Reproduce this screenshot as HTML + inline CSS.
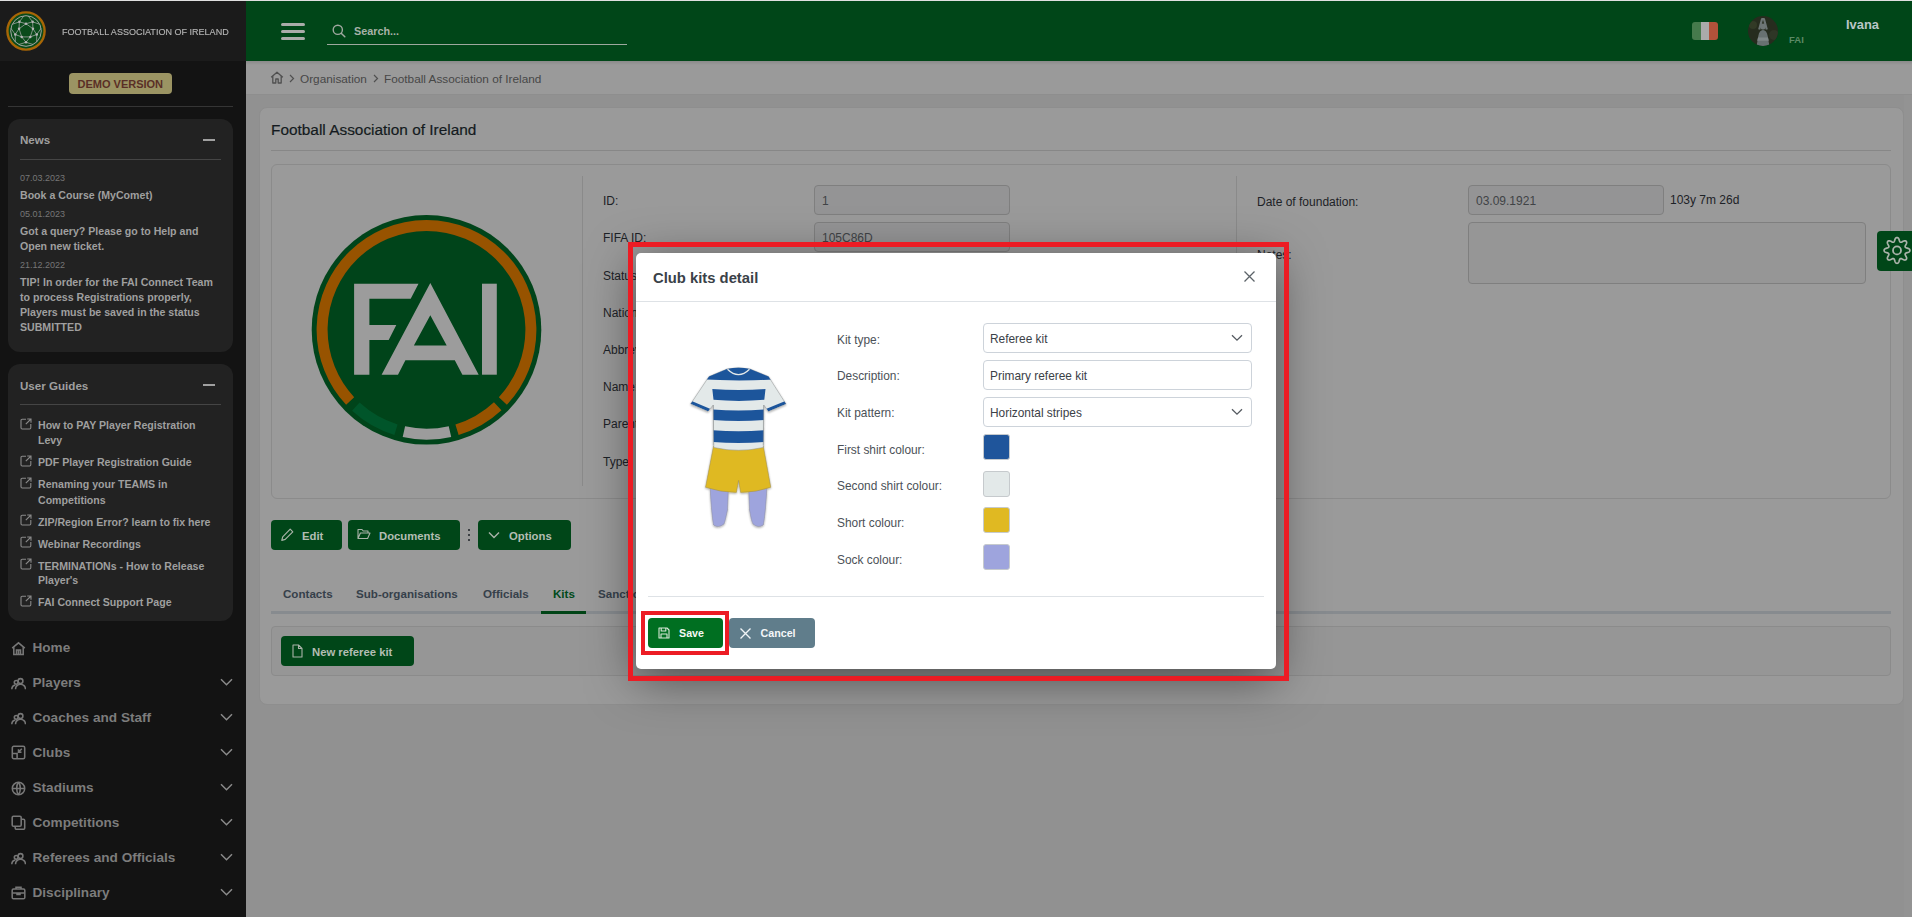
<!DOCTYPE html>
<html><head><meta charset="utf-8">
<style>
*{box-sizing:border-box;margin:0;padding:0}
html,body{width:1912px;height:917px;overflow:hidden;background:#919191;font-family:"Liberation Sans",sans-serif;position:relative}
.abs{position:absolute}
.t{position:absolute;white-space:nowrap;line-height:1}
#topline{left:0;top:0;width:1912px;height:1px;background:#e0e0e0}
#sb{left:0;top:1px;width:246px;height:916px;background:#131313}
#sbhead{left:0;top:1px;width:246px;height:60px;background:#1b1b1b}
#hdr{left:246px;top:1px;width:1666px;height:60px;background:#004618}
#bc{left:246px;top:61px;width:1666px;height:34px;background:#9a9a9a;border-bottom:1px solid #8e8e8e}
#card{left:259px;top:107px;width:1645px;height:598px;background:#9a9a9a;border:1px solid #8e8e8e;border-radius:8px}
.panel{position:absolute;left:8px;width:225px;background:#222;border-radius:12px}
.sbt{color:#9f9f9f;font-weight:700;font-size:10.6px}
.date{color:#767676;font-size:9px}
.nav{color:#7c7c7c;font-weight:700;font-size:13.6px}
.navi{position:absolute;left:10.8px;width:15px;height:15px}
.chev{position:absolute;left:220px;width:13px;height:8px}
.lbl{font-size:12px;color:#1d2227}
.inp{border:1px solid #7f7f7f;border-radius:4px}
.dis{background:#949495}
.inpt{font-size:12px;color:#404346}
.btn{height:30px;background:#004618;border-radius:4px}
.btnt{font-size:11.3px;font-weight:700;color:#b3bdb3}
.tab{font-size:11.6px;color:#36404a;font-weight:700}
.mlbl{font-size:11.9px;color:#4b5157}
.minp{width:269px;border:1px solid #cdd3da;border-radius:4px;background:#fff}
.minpt{font-size:11.9px;color:#3b4147}
.sw{width:27px;height:26px;border:1px solid #c6cacd;border-radius:3px}
</style></head><body>
<div id="topline" class="abs"></div>
<div id="sb" class="abs"></div>
<div id="sbhead" class="abs"></div>
<!-- sidebar logo -->
<svg class="abs" style="left:4px;top:9px" width="44" height="44" viewBox="0 0 44 44">
 <circle cx="22" cy="22" r="18.6" fill="#0a4a1a" stroke="#a86606" stroke-width="2.4"/>
 <circle cx="22" cy="22" r="15.3" fill="none" stroke="#b0b0b0" stroke-width="0.9"/>
 <g stroke="#a8a8a8" stroke-width="0.75" fill="none"><polygon points="22.00,14.70 28.94,19.74 26.29,27.91 17.71,27.91 15.06,19.74"/><polyline points="22.00,14.70 28.64,12.86 28.94,19.74 32.75,25.49 26.29,27.91 22.00,33.30 17.71,27.91 11.25,25.49 15.06,19.74 15.36,12.86 22.00,14.70"/><line x1="28.64" y1="12.86" x2="24.13" y2="6.85"/><line x1="28.64" y1="12.86" x2="35.75" y2="15.29"/><line x1="32.75" y1="25.49" x2="37.07" y2="19.34"/><line x1="32.75" y1="25.49" x2="32.63" y2="33.01"/><line x1="22.00" y1="33.30" x2="29.18" y2="35.51"/><line x1="22.00" y1="33.30" x2="14.82" y2="35.51"/><line x1="11.25" y1="25.49" x2="11.37" y2="33.01"/><line x1="11.25" y1="25.49" x2="6.93" y2="19.34"/><line x1="15.36" y1="12.86" x2="8.25" y2="15.29"/><line x1="15.36" y1="12.86" x2="19.87" y2="6.85"/></g>
 <g fill="#b8b8b8"><circle cx="22.00" cy="14.70" r="1.25"/><circle cx="28.94" cy="19.74" r="1.25"/><circle cx="26.29" cy="27.91" r="1.25"/><circle cx="17.71" cy="27.91" r="1.25"/><circle cx="15.06" cy="19.74" r="1.25"/><circle cx="28.64" cy="12.86" r="1.25"/><circle cx="32.75" cy="25.49" r="1.25"/><circle cx="22.00" cy="33.30" r="1.25"/><circle cx="11.25" cy="25.49" r="1.25"/><circle cx="15.36" cy="12.86" r="1.25"/></g>
</svg>
<div class="t" style="left:62px;top:26.5px;font-size:9.9px;color:#b4b4b4;transform:scaleX(0.915);transform-origin:0 0;-webkit-text-stroke:0.15px #b4b4b4">FOOTBALL ASSOCIATION OF IRELAND</div>
<div class="abs" style="left:69px;top:73px;width:103px;height:21px;background:#9b9463;border-radius:4px"></div>
<div class="t" style="left:77.5px;top:78.5px;font-size:11px;font-weight:700;color:#5a2f26">DEMO VERSION</div>
<div class="abs" style="left:8px;top:106px;width:225px;height:1px;background:#353535"></div>

<!-- News -->
<div class="panel" style="top:119px;height:233px"></div>
<div class="t sbt" style="left:20px;top:133.5px;font-size:11.6px">News</div>
<div class="abs" style="left:203px;top:139px;width:12px;height:2px;background:#a0a0a0"></div>
<div class="abs" style="left:20px;top:159px;width:201px;height:1px;background:#454545"></div>
<div class="t date" style="left:20px;top:174px">07.03.2023</div>
<div class="t sbt" style="left:20px;top:190px">Book a Course (MyComet)</div>
<div class="t date" style="left:20px;top:210px">05.01.2023</div>
<div class="t sbt" style="left:20px;top:226px">Got a query? Please go to Help and</div>
<div class="t sbt" style="left:20px;top:241px">Open new ticket.</div>
<div class="t date" style="left:20px;top:261px">21.12.2022</div>
<div class="t sbt" style="left:20px;top:277px">TIP! In order for the FAI Connect Team</div>
<div class="t sbt" style="left:20px;top:292px">to process Registrations properly,</div>
<div class="t sbt" style="left:20px;top:307px">Players must be saved in the status</div>
<div class="t sbt" style="left:20px;top:322px">SUBMITTED</div>

<!-- User guides -->
<div class="panel" style="top:364px;height:257px"></div>
<div class="t sbt" style="left:20px;top:379.5px;font-size:11.6px">User Guides</div>
<div class="abs" style="left:203px;top:384px;width:12px;height:2px;background:#a0a0a0"></div>
<div class="abs" style="left:20px;top:404px;width:201px;height:1px;background:#454545"></div>
<svg class="abs" style="left:20px;top:418px" width="12" height="12" viewBox="0 0 12 12"><path d="M6 1.2H2.2A1.2 1.2 0 0 0 1 2.4v7.4A1.2 1.2 0 0 0 2.2 11h7.4a1.2 1.2 0 0 0 1.2-1.2V6" fill="none" stroke="#8a8a8a" stroke-width="1.1"/><path d="M7.2 1h3.8v3.8M11 1L5.8 6.2" fill="none" stroke="#8a8a8a" stroke-width="1.1"/></svg>
<div class="t sbt" style="left:38px;top:420px">How to PAY Player Registration</div>
<div class="t sbt" style="left:38px;top:435px">Levy</div>
<svg class="abs" style="left:20px;top:455px" width="12" height="12" viewBox="0 0 12 12"><path d="M6 1.2H2.2A1.2 1.2 0 0 0 1 2.4v7.4A1.2 1.2 0 0 0 2.2 11h7.4a1.2 1.2 0 0 0 1.2-1.2V6" fill="none" stroke="#8a8a8a" stroke-width="1.1"/><path d="M7.2 1h3.8v3.8M11 1L5.8 6.2" fill="none" stroke="#8a8a8a" stroke-width="1.1"/></svg>
<div class="t sbt" style="left:38px;top:457px">PDF Player Registration Guide</div>
<svg class="abs" style="left:20px;top:477px" width="12" height="12" viewBox="0 0 12 12"><path d="M6 1.2H2.2A1.2 1.2 0 0 0 1 2.4v7.4A1.2 1.2 0 0 0 2.2 11h7.4a1.2 1.2 0 0 0 1.2-1.2V6" fill="none" stroke="#8a8a8a" stroke-width="1.1"/><path d="M7.2 1h3.8v3.8M11 1L5.8 6.2" fill="none" stroke="#8a8a8a" stroke-width="1.1"/></svg>
<div class="t sbt" style="left:38px;top:479px">Renaming your TEAMS in</div>
<div class="t sbt" style="left:38px;top:495px">Competitions</div>
<svg class="abs" style="left:20px;top:514px" width="12" height="12" viewBox="0 0 12 12"><path d="M6 1.2H2.2A1.2 1.2 0 0 0 1 2.4v7.4A1.2 1.2 0 0 0 2.2 11h7.4a1.2 1.2 0 0 0 1.2-1.2V6" fill="none" stroke="#8a8a8a" stroke-width="1.1"/><path d="M7.2 1h3.8v3.8M11 1L5.8 6.2" fill="none" stroke="#8a8a8a" stroke-width="1.1"/></svg>
<div class="t sbt" style="left:38px;top:517px">ZIP/Region Error? learn to fix here</div>
<svg class="abs" style="left:20px;top:536px" width="12" height="12" viewBox="0 0 12 12"><path d="M6 1.2H2.2A1.2 1.2 0 0 0 1 2.4v7.4A1.2 1.2 0 0 0 2.2 11h7.4a1.2 1.2 0 0 0 1.2-1.2V6" fill="none" stroke="#8a8a8a" stroke-width="1.1"/><path d="M7.2 1h3.8v3.8M11 1L5.8 6.2" fill="none" stroke="#8a8a8a" stroke-width="1.1"/></svg>
<div class="t sbt" style="left:38px;top:539px">Webinar Recordings</div>
<svg class="abs" style="left:20px;top:558px" width="12" height="12" viewBox="0 0 12 12"><path d="M6 1.2H2.2A1.2 1.2 0 0 0 1 2.4v7.4A1.2 1.2 0 0 0 2.2 11h7.4a1.2 1.2 0 0 0 1.2-1.2V6" fill="none" stroke="#8a8a8a" stroke-width="1.1"/><path d="M7.2 1h3.8v3.8M11 1L5.8 6.2" fill="none" stroke="#8a8a8a" stroke-width="1.1"/></svg>
<div class="t sbt" style="left:38px;top:561px">TERMINATIONs - How to Release</div>
<div class="t sbt" style="left:38px;top:575px">Player's</div>
<svg class="abs" style="left:20px;top:595px" width="12" height="12" viewBox="0 0 12 12"><path d="M6 1.2H2.2A1.2 1.2 0 0 0 1 2.4v7.4A1.2 1.2 0 0 0 2.2 11h7.4a1.2 1.2 0 0 0 1.2-1.2V6" fill="none" stroke="#8a8a8a" stroke-width="1.1"/><path d="M7.2 1h3.8v3.8M11 1L5.8 6.2" fill="none" stroke="#8a8a8a" stroke-width="1.1"/></svg>
<div class="t sbt" style="left:38px;top:597px">FAI Connect Support Page</div>

<!-- Nav -->
<div class="t nav" style="left:32.5px;top:641px">Home</div>
<svg class="navi" style="top:641px" viewBox="0 0 15 15" fill="none" stroke="#777" stroke-width="1.55" id="ic_Home"><path d="M1.2 7.2L7.5 1.8l6.3 5.4"/><path d="M2.8 6.2v7.3h9.4V6.2"/><path d="M5.5 13.5V9h4v4.5M7.5 9v4.5"/></svg>
<div class="t nav" style="left:32.5px;top:676px">Players</div>
<svg class="navi" style="top:676px" viewBox="0 0 15 15" fill="none" stroke="#777" stroke-width="1.55" id="ic_Players"><circle cx="9.5" cy="5" r="2.4"/><path d="M4.5 13.2a5 5 0 0 1 10 0"/><circle cx="5.2" cy="6.3" r="1.9"/><path d="M0.8 13.2a4.4 4.4 0 0 1 3.6-4.2"/></svg>
<svg class="chev" style="top:678px" viewBox="0 0 13 8"><path d="M1 1.2l5.5 5.5 5.5-5.5" fill="none" stroke="#8a8a8a" stroke-width="1.5"/></svg>
<div class="t nav" style="left:32.5px;top:711px">Coaches and Staff</div>
<svg class="navi" style="top:711px" viewBox="0 0 15 15" fill="none" stroke="#777" stroke-width="1.55" id="ic_Coaches"><circle cx="9.5" cy="5" r="2.4"/><path d="M4.5 13.2a5 5 0 0 1 10 0"/><circle cx="5.2" cy="6.3" r="1.9"/><path d="M0.8 13.2a4.4 4.4 0 0 1 3.6-4.2"/></svg>
<svg class="chev" style="top:713px" viewBox="0 0 13 8"><path d="M1 1.2l5.5 5.5 5.5-5.5" fill="none" stroke="#8a8a8a" stroke-width="1.5"/></svg>
<div class="t nav" style="left:32.5px;top:746px">Clubs</div>
<svg class="navi" style="top:745px" viewBox="0 0 15 15" fill="none" stroke="#777" stroke-width="1.55" id="ic_Clubs"><rect x="1.3" y="1.3" width="12.4" height="12.4" rx="1.5"/><path d="M1.3 8.5h4.8v5.2M10.8 3.8L7.5 7.2M7.5 4.2v3h3"/></svg>
<svg class="chev" style="top:748px" viewBox="0 0 13 8"><path d="M1 1.2l5.5 5.5 5.5-5.5" fill="none" stroke="#8a8a8a" stroke-width="1.5"/></svg>
<div class="t nav" style="left:32.5px;top:781px">Stadiums</div>
<svg class="navi" style="top:781px" viewBox="0 0 15 15" fill="none" stroke="#777" stroke-width="1.55" id="ic_Stadiums"><circle cx="7.5" cy="7.5" r="6.2"/><path d="M1.3 7.5h12.4M7.5 1.3c-2.4 2.8-2.4 9.6 0 12.4M7.5 1.3c2.4 2.8 2.4 9.6 0 12.4"/></svg>
<svg class="chev" style="top:783px" viewBox="0 0 13 8"><path d="M1 1.2l5.5 5.5 5.5-5.5" fill="none" stroke="#8a8a8a" stroke-width="1.5"/></svg>
<div class="t nav" style="left:32.5px;top:816px">Competitions</div>
<svg class="navi" style="top:815px" viewBox="0 0 15 15" fill="none" stroke="#777" stroke-width="1.55" id="ic_Competitions"><rect x="1.2" y="1.2" width="9" height="10" rx="1.3"/><path d="M10.2 4.2h2.2a1.3 1.3 0 0 1 1.3 1.3v7.5a1.3 1.3 0 0 1-1.3 1.3H5.5a1.3 1.3 0 0 1-1.3-1.3v-1.8"/></svg>
<svg class="chev" style="top:818px" viewBox="0 0 13 8"><path d="M1 1.2l5.5 5.5 5.5-5.5" fill="none" stroke="#8a8a8a" stroke-width="1.5"/></svg>
<div class="t nav" style="left:32.5px;top:851px">Referees and Officials</div>
<svg class="navi" style="top:851px" viewBox="0 0 15 15" fill="none" stroke="#777" stroke-width="1.55" id="ic_Referees"><circle cx="9.5" cy="5" r="2.4"/><path d="M4.5 13.2a5 5 0 0 1 10 0"/><circle cx="5.2" cy="6.3" r="1.9"/><path d="M0.8 13.2a4.4 4.4 0 0 1 3.6-4.2"/></svg>
<svg class="chev" style="top:853px" viewBox="0 0 13 8"><path d="M1 1.2l5.5 5.5 5.5-5.5" fill="none" stroke="#8a8a8a" stroke-width="1.5"/></svg>
<div class="t nav" style="left:32.5px;top:886px">Disciplinary</div>
<svg class="navi" style="top:885px" viewBox="0 0 15 15" fill="none" stroke="#777" stroke-width="1.55" id="ic_Disciplinary"><rect x="1.2" y="4" width="12.6" height="9.8" rx="1.3"/><path d="M5 4V2.2h5V4M1.2 8h12.6M6 8v1.5h3V8"/></svg>
<svg class="chev" style="top:888px" viewBox="0 0 13 8"><path d="M1 1.2l5.5 5.5 5.5-5.5" fill="none" stroke="#8a8a8a" stroke-width="1.5"/></svg>

<!-- header -->
<div id="hdr" class="abs"></div>
<div class="abs" style="left:281px;top:23px;width:24px;height:3px;background:#a9aca9;border-radius:2px"></div>
<div class="abs" style="left:281px;top:30px;width:24px;height:3px;background:#a9aca9;border-radius:2px"></div>
<div class="abs" style="left:281px;top:37px;width:24px;height:3px;background:#a9aca9;border-radius:2px"></div>
<svg class="abs" style="left:332px;top:24px" width="14" height="14" viewBox="0 0 14 14"><circle cx="5.8" cy="5.8" r="4.6" fill="none" stroke="#a0a8a0" stroke-width="1.4"/><path d="M9.2 9.2L12.8 12.8" stroke="#a0a8a0" stroke-width="1.5" stroke-linecap="round"/></svg>
<div class="t" style="left:354px;top:26px;font-size:10.8px;color:#a8b2a8;font-weight:700">Search...</div>
<div class="abs" style="left:327px;top:44px;width:300px;height:1px;background:#9ea89e"></div>
<div class="abs" style="left:1692px;top:22px;width:26px;height:18px;border-radius:3px;overflow:hidden;display:flex"><div style="flex:1;background:#467a4c"></div><div style="flex:1;background:#aaaaaa"></div><div style="flex:1;background:#b0523a"></div></div>
<svg class="abs" style="left:1748px;top:16px" width="30" height="30" viewBox="0 0 30 30"><defs><clipPath id="av"><circle cx="15" cy="15" r="15"/></clipPath></defs><g clip-path="url(#av)"><rect width="30" height="30" fill="#262c1e"/><circle cx="5" cy="9" r="4" fill="#323a26"/><circle cx="26" cy="19" r="5" fill="#2e3626"/><path d="M11.2 13.5L14 3.2h2l2.8 10.3" fill="none" stroke="#6c7474" stroke-width="2.2" stroke-linejoin="round"/><ellipse cx="15" cy="10.5" rx="2.7" ry="3.1" fill="#6e7676"/><path d="M8.5 30.5l1.8-10.5c0.6-3.8 2.4-6 4.7-6s4.1 2.2 4.7 6l1.8 10.5z" fill="#687171"/><path d="M10 21.5h10l0.8 3.2h-11.6z" fill="#7f8787"/></g></svg>
<div class="t" style="left:1789px;top:35px;font-size:9.5px;font-weight:700;color:#5c8a66">FAI</div>
<div class="t" style="left:1846px;top:19px;font-size:12.9px;font-weight:700;color:#b9c5c6">Ivana</div>
<div id="bc" class="abs"></div>
<div class="abs" style="left:246px;top:61px;width:1666px;height:4px;background:linear-gradient(#8a8a8a,rgba(154,154,154,0))"></div>
<svg class="abs" style="left:270px;top:71px" width="14" height="13" viewBox="0 0 14 13"><path d="M1.2 6.2L7 1.2l5.8 5M2.8 5v7h3v-4h2.4v4h3V5" fill="none" stroke="#505050" stroke-width="1.3" stroke-linejoin="round"/></svg>
<svg class="abs" style="left:289px;top:74px" width="6" height="9" viewBox="0 0 6 9"><path d="M1 1l3.5 3.5L1 8" fill="none" stroke="#505050" stroke-width="1.2"/></svg>
<div class="t" style="left:300px;top:74px;font-size:11.8px;color:#474747">Organisation</div>
<svg class="abs" style="left:373px;top:74px" width="6" height="9" viewBox="0 0 6 9"><path d="M1 1l3.5 3.5L1 8" fill="none" stroke="#505050" stroke-width="1.2"/></svg>
<div class="t" style="left:384px;top:74px;font-size:11.8px;color:#474747">Football Association of Ireland</div>
<!-- card -->
<div class="abs" style="left:1904px;top:95px;width:8px;height:822px;background:#939393"></div>
<div id="card" class="abs"></div>
<div class="t" style="left:271px;top:122px;font-size:15.4px;color:#141a20;-webkit-text-stroke:0.2px #141a20">Football Association of Ireland</div>
<div class="abs" style="left:271px;top:150px;width:1620px;height:1px;background:#878787"></div>
<div class="abs" style="left:271px;top:164px;width:1620px;height:335px;border:1px solid #8b8b8b;border-radius:6px"></div>
<div class="abs" style="left:582px;top:176px;width:1px;height:310px;background:#8a8a8a"></div>
<div class="abs" style="left:1236px;top:176px;width:1px;height:310px;background:#8a8a8a"></div>
<svg class="abs" style="left:311px;top:214px" width="232" height="232" viewBox="0 0 232 232">
 <circle cx="115.5" cy="115.8" r="114.8" fill="#00441a"/>
 <path d="M39.15 187.00 A104.4 104.4 0 1 1 191.85 187.00" fill="none" stroke="#975300" stroke-width="11"/>
 <path d="M84.98 215.64 A104.4 104.4 0 0 1 44.83 192.65" fill="none" stroke="#00552a" stroke-width="11"/>
 <path d="M138.98 217.52 A104.4 104.4 0 0 1 92.90 217.73" fill="none" stroke="#9c9c9c" stroke-width="11"/>
 <path d="M186.70 192.15 A104.4 104.4 0 0 1 146.02 215.64" fill="none" stroke="#975300" stroke-width="11"/>
 <g fill="#9c9c9c">
  <path d="M43.1 69.7H107.5L99.7 84.8H58.4V111H85.3L77.7 126H58.4V160.7H43.1Z"/>
  <path d="M119.3 69.1L167.7 160.7H151.4L143.8 146.3H94.4L87 160.7H70.6Z M119.3 101.2L102.9 131.5H135.7Z" fill-rule="evenodd"/>
  <rect x="171" y="69.7" width="14.8" height="91"/>
 </g>
</svg>
<div class="t lbl" style="left:603px;top:195px">ID:</div>
<div class="t lbl" style="left:603px;top:232px">FIFA ID:</div>
<div class="t lbl" style="left:603px;top:270px">Status:</div>
<div class="t lbl" style="left:603px;top:307px">Nationality:</div>
<div class="t lbl" style="left:603px;top:344px">Abbreviation:</div>
<div class="t lbl" style="left:603px;top:381px">Name:</div>
<div class="t lbl" style="left:603px;top:418px">Parent:</div>
<div class="t lbl" style="left:603px;top:456px">Type:</div>
<div class="abs inp dis" style="left:814px;top:185px;width:196px;height:30px"></div>
<div class="t inpt" style="left:822px;top:195px">1</div>
<div class="abs inp dis" style="left:814px;top:222px;width:196px;height:30px"></div>
<div class="t inpt" style="left:822px;top:232px">105C86D</div>
<div class="t lbl" style="left:1257px;top:195.5px">Date of foundation:</div>
<div class="abs inp dis" style="left:1468px;top:185px;width:196px;height:30px"></div>
<div class="t inpt" style="left:1476px;top:195px">03.09.1921</div>
<div class="t lbl" style="left:1670px;top:194px;color:#1d2227">103y 7m 26d</div>
<div class="t lbl" style="left:1257px;top:248.5px">Notes:</div>
<div class="abs inp" style="left:1468px;top:222px;width:398px;height:62px;background:#969696"></div>
<div class="abs" style="left:1877px;top:231px;width:35px;height:40px;background:#004618;border-radius:4px 0 0 4px"></div>
<svg class="abs" style="left:1877px;top:231px" width="35" height="40" viewBox="0 0 35 40"><polygon points="32.90,19.40 32.85,19.80 32.71,20.20 32.45,20.58 32.06,20.92 31.51,21.22 30.86,21.47 30.18,21.68 29.57,21.86 29.08,22.04 28.72,22.23 28.46,22.45 28.28,22.68 28.18,22.94 28.13,23.23 28.16,23.56 28.28,23.95 28.50,24.43 28.81,24.99 29.15,25.62 29.43,26.25 29.60,26.85 29.64,27.37 29.55,27.82 29.38,28.20 29.12,28.52 28.80,28.78 28.42,28.95 27.97,29.04 27.45,29.00 26.85,28.83 26.22,28.55 25.59,28.21 25.03,27.90 24.55,27.68 24.16,27.56 23.83,27.53 23.54,27.58 23.28,27.68 23.05,27.86 22.83,28.12 22.64,28.48 22.46,28.97 22.28,29.58 22.07,30.26 21.82,30.91 21.52,31.46 21.18,31.85 20.80,32.11 20.40,32.25 20.00,32.30 19.60,32.25 19.20,32.11 18.82,31.85 18.48,31.46 18.18,30.91 17.93,30.26 17.72,29.58 17.54,28.97 17.36,28.48 17.17,28.12 16.95,27.86 16.72,27.68 16.46,27.58 16.17,27.53 15.84,27.56 15.45,27.68 14.97,27.90 14.41,28.21 13.78,28.55 13.15,28.83 12.55,29.00 12.03,29.04 11.58,28.95 11.20,28.78 10.88,28.52 10.62,28.20 10.45,27.82 10.36,27.37 10.40,26.85 10.57,26.25 10.85,25.62 11.19,24.99 11.50,24.43 11.72,23.95 11.84,23.56 11.87,23.23 11.82,22.94 11.72,22.68 11.54,22.45 11.28,22.23 10.92,22.04 10.43,21.86 9.82,21.68 9.14,21.47 8.49,21.22 7.94,20.92 7.55,20.58 7.29,20.20 7.15,19.80 7.10,19.40 7.15,19.00 7.29,18.60 7.55,18.22 7.94,17.88 8.49,17.58 9.14,17.33 9.82,17.12 10.43,16.94 10.92,16.76 11.28,16.57 11.54,16.35 11.72,16.12 11.82,15.86 11.87,15.57 11.84,15.24 11.72,14.85 11.50,14.37 11.19,13.81 10.85,13.18 10.57,12.55 10.40,11.95 10.36,11.43 10.45,10.98 10.62,10.60 10.88,10.28 11.20,10.02 11.58,9.85 12.03,9.76 12.55,9.80 13.15,9.97 13.78,10.25 14.41,10.59 14.97,10.90 15.45,11.12 15.84,11.24 16.17,11.27 16.46,11.22 16.72,11.12 16.95,10.94 17.17,10.68 17.36,10.32 17.54,9.83 17.72,9.22 17.93,8.54 18.18,7.89 18.48,7.34 18.82,6.95 19.20,6.69 19.60,6.55 20.00,6.50 20.40,6.55 20.80,6.69 21.18,6.95 21.52,7.34 21.82,7.89 22.07,8.54 22.28,9.22 22.46,9.83 22.64,10.32 22.83,10.68 23.05,10.94 23.28,11.12 23.54,11.22 23.83,11.27 24.16,11.24 24.55,11.12 25.03,10.90 25.59,10.59 26.22,10.25 26.85,9.97 27.45,9.80 27.97,9.76 28.42,9.85 28.80,10.02 29.12,10.28 29.38,10.60 29.55,10.98 29.64,11.43 29.60,11.95 29.43,12.55 29.15,13.18 28.81,13.81 28.50,14.37 28.28,14.85 28.16,15.24 28.13,15.57 28.18,15.86 28.28,16.12 28.46,16.35 28.72,16.57 29.08,16.76 29.57,16.94 30.18,17.12 30.86,17.33 31.51,17.58 32.06,17.88 32.45,18.22 32.71,18.60 32.85,19.00" fill="none" stroke="#aab3aa" stroke-width="1.7" stroke-linejoin="round"/><circle cx="20.0" cy="19.4" r="4" fill="none" stroke="#aab3aa" stroke-width="1.8"/></svg>
<!-- buttons -->
<div class="abs btn" style="left:271px;top:520px;width:71px"></div>
<svg class="abs" style="left:281px;top:528px" width="13" height="14" viewBox="0 0 13 14"><path d="M9.2 1.2l2.6 2.6-7.6 7.6-3.4.9.9-3.4z" fill="none" stroke="#a9b3a9" stroke-width="1.2" stroke-linejoin="round"/></svg>
<div class="t btnt" style="left:302px;top:530.5px">Edit</div>
<div class="abs btn" style="left:348px;top:520px;width:112px"></div>
<svg class="abs" style="left:357px;top:528px" width="14" height="12" viewBox="0 0 14 12"><path d="M1 10.5V1.5h4l1.2 1.5H11v2M1 10.5l2.4-5.5H13l-2.4 5.5z" fill="none" stroke="#a9b3a9" stroke-width="1.1" stroke-linejoin="round"/></svg>
<div class="t btnt" style="left:379px;top:530.5px">Documents</div>
<div class="abs" style="left:467.5px;top:529px;width:2.2px;height:2.2px;background:#1d2227;border-radius:50%"></div>
<div class="abs" style="left:467.5px;top:533.8px;width:2.2px;height:2.2px;background:#1d2227;border-radius:50%"></div>
<div class="abs" style="left:467.5px;top:538.6px;width:2.2px;height:2.2px;background:#1d2227;border-radius:50%"></div>
<div class="abs btn" style="left:478px;top:520px;width:93px"></div>
<svg class="abs" style="left:488px;top:531px" width="12" height="8" viewBox="0 0 12 8"><path d="M1 1.5l5 5 5-5" fill="none" stroke="#a9b3a9" stroke-width="1.4"/></svg>
<div class="t btnt" style="left:509px;top:530.5px">Options</div>
<!-- tabs -->
<div class="t tab" style="left:283px;top:588px">Contacts</div>
<div class="t tab" style="left:356px;top:588px">Sub-organisations</div>
<div class="t tab" style="left:483px;top:588px">Officials</div>
<div class="t tab" style="left:553px;top:588px;color:#004a1a">Kits</div>
<div class="t tab" style="left:598px;top:588px">Sanctions</div>
<div class="abs" style="left:271px;top:611px;width:1620px;height:3px;background:#878b8f"></div>
<div class="abs" style="left:541px;top:611px;width:45px;height:3px;background:#004416"></div>
<div class="abs" style="left:271px;top:626px;width:1620px;height:50px;border:1px solid #8b8b8b;border-radius:4px;background:#969696"></div>
<div class="abs btn" style="left:281px;top:636px;width:133px"></div>
<svg class="abs" style="left:292px;top:644px" width="11" height="14" viewBox="0 0 11 14"><path d="M1 1h5.5L10 4.5V13H1zM6.5 1v3.5H10" fill="none" stroke="#a9b3a9" stroke-width="1.1" stroke-linejoin="round"/></svg>
<div class="t btnt" style="left:312px;top:646.5px">New referee kit</div>
<!-- modal -->
<div class="abs" style="left:636px;top:253px;width:640px;height:416px;background:#fff;border-radius:5px;box-shadow:0 10px 48px rgba(0,0,0,0.5)"></div>
<div class="t" style="left:653px;top:271px;font-size:14.8px;font-weight:700;color:#3a4148">Club kits detail</div>
<svg class="abs" style="left:1243px;top:270px" width="13" height="13" viewBox="0 0 13 13"><path d="M1.5 1.5l10 10M11.5 1.5l-10 10" stroke="#5c6369" stroke-width="1.3"/></svg>
<div class="abs" style="left:636px;top:301px;width:640px;height:1px;background:#dee2e6"></div>
<div class="t mlbl" style="left:837px;top:334.8px">Kit type:</div>
<div class="t mlbl" style="left:837px;top:371.3px">Description:</div>
<div class="t mlbl" style="left:837px;top:408.3px">Kit pattern:</div>
<div class="t mlbl" style="left:837px;top:445.3px">First shirt colour:</div>
<div class="t mlbl" style="left:837px;top:481.3px">Second shirt colour:</div>
<div class="t mlbl" style="left:837px;top:518.3px">Short colour:</div>
<div class="t mlbl" style="left:837px;top:555.3px">Sock colour:</div>
<div class="abs minp" style="left:983px;top:323px;height:30px"></div>
<div class="t minpt" style="left:990px;top:333.5px">Referee kit</div>
<svg class="abs" style="left:1231px;top:334px" width="12" height="8" viewBox="0 0 12 8"><path d="M1 1.2l5 5 5-5" fill="none" stroke="#555b61" stroke-width="1.3"/></svg>
<div class="abs minp" style="left:983px;top:360px;height:30px"></div>
<div class="t minpt" style="left:990px;top:370.5px">Primary referee kit</div>
<div class="abs minp" style="left:983px;top:397px;height:30px"></div>
<div class="t minpt" style="left:990px;top:407.5px">Horizontal stripes</div>
<svg class="abs" style="left:1231px;top:408px" width="12" height="8" viewBox="0 0 12 8"><path d="M1 1.2l5 5 5-5" fill="none" stroke="#555b61" stroke-width="1.3"/></svg>
<div class="abs sw" style="left:983px;top:434px;background:#1f559b"></div>
<div class="abs sw" style="left:983px;top:471px;background:#e3e9e9"></div>
<div class="abs sw" style="left:983px;top:507px;background:#e0b922"></div>
<div class="abs sw" style="left:983px;top:544px;background:#9ea4dd"></div>
<div class="abs" style="left:648px;top:596px;width:616px;height:1px;background:#dee2e6"></div>
<div class="abs" style="left:648px;top:618px;width:75px;height:30px;background:#006f21;border-radius:4px"></div>
<svg class="abs" style="left:658px;top:627px" width="12" height="12" viewBox="0 0 12 12"><path d="M1 1h8l2 2v8H1z M3.2 1v3h4.6V1 M3 11V7h6v4" fill="none" stroke="#d8e8d8" stroke-width="1.1" stroke-linejoin="round"/></svg>
<div class="t" style="left:679px;top:628px;font-size:10.7px;font-weight:700;color:#f4f8f4">Save</div>
<div class="abs" style="left:729px;top:618px;width:86px;height:30px;background:#607d8b;border-radius:4px"></div>
<svg class="abs" style="left:739px;top:627px" width="13" height="13" viewBox="0 0 13 13"><path d="M1.5 1.5l10 10M11.5 1.5l-10 10" stroke="#f0f4f6" stroke-width="1.4"/></svg>
<div class="t" style="left:760.5px;top:628px;font-size:10.7px;font-weight:700;color:#f4f6f8">Cancel</div>
<div class="abs" style="left:628px;top:242px;width:661px;height:439px;border:5px solid #ec1c24"></div>
<div class="abs" style="left:641px;top:611px;width:88px;height:44px;border:4.5px solid #ec1c24"></div>
<svg class="abs" style="left:680px;top:360px" width="120" height="180" viewBox="680 360 120 180">
 <defs>
  <filter id="ksh" x="-20%" y="-20%" width="140%" height="140%"><feGaussianBlur in="SourceAlpha" stdDeviation="1.2"/><feOffset dx="0" dy="0.5"/><feComponentTransfer><feFuncA type="linear" slope="0.35"/></feComponentTransfer><feMerge><feMergeNode/><feMergeNode in="SourceGraphic"/></feMerge></filter>
  <clipPath id="shirtclip"><path d="M727 369 L709 376.5 L690.6 404 L708 411.5 L713.2 405 L713.8 447.5 Q738.5 453 763.3 447.5 L763.8 405 L768.5 411.5 L786 404 L768.5 376.5 L750 369 Q738.5 366.5 727 369 Z"/></clipPath>
 </defs>
 <g filter="url(#ksh)">
  <path d="M710 486 L728.5 486 L727.5 510 Q725 522 724 524 Q718.5 528.5 713.5 525 Q711.5 515 710 486 Z" fill="#9ea4dd" stroke="#8a8a9a" stroke-width="0.5"/>
  <path d="M748.5 486 L767 486 Q765.5 515 763.3 525 Q758 528.5 753 524 Q751.5 522 749.5 510 Z" fill="#9ea4dd" stroke="#8a8a9a" stroke-width="0.5"/>
  <path d="M713.5 446 L763.3 446 L770.8 487.3 Q756 492.5 740.6 492.4 L738.6 480.4 L736.4 492.4 Q721 492.5 705.5 487.3 Z" fill="#dfb922" stroke="#9a8a50" stroke-width="0.5"/>
  <path d="M727 369 L709 376.5 L690.6 404 L708 411.5 L713.2 405 L713.8 447.5 Q738.5 453 763.3 447.5 L763.8 405 L768.5 411.5 L786 404 L768.5 376.5 L750 369 Q738.5 366.5 727 369 Z" fill="#e3e9e9" stroke="#8a8f8f" stroke-width="0.5"/>
  <g clip-path="url(#shirtclip)" fill="#1f559b">
   <path d="M700 360 H780 V379.3 Q738.5 381.5 700 379.3 Z"/>
   <path d="M712.3 389 Q738.5 391 765.5 389 L764.3 399.8 Q738.5 402 713.5 399.8 Z"/>
   <path d="M713 409.5 Q738.5 411.5 764 409.5 V420 Q738.5 422 713 420 Z"/>
   <path d="M713 430.2 Q738.5 432.2 764 430.2 V442 Q738.5 444 713 442 Z"/>
   <path d="M690 403.5 L708.5 411.5 L710 408.8 L691.6 401 Z"/>
   <path d="M787 403.5 L768 411.5 L766.5 408.8 L785.4 401 Z"/>
  </g>
  <path d="M727.5 369.2 Q738.5 380 749.5 369.2" fill="none" stroke="#e3e9e9" stroke-width="1.3"/>
  <path d="M713.5 405 L713.2 445 M763.5 405 L763.3 445" fill="none" stroke="#8a8f8f" stroke-width="0.4"/>
 </g>
</svg>

</body></html>
